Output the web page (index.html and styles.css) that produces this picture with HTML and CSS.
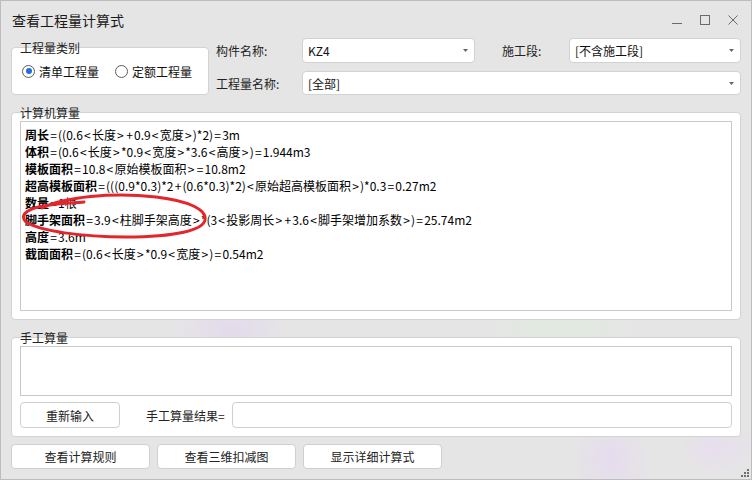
FILE: index.html
```html
<!DOCTYPE html>
<html lang="zh-CN">
<head>
<meta charset="utf-8">
<title>查看工程量计算式</title>
<link rel="stylesheet" href="styles.css">
</head>
<body>
<div class="window">
  <div class="titlebar">
    <div class="title">查看工程量计算式</div>
    <div class="controls">
      <svg width="10" height="10" viewBox="0 0 10 10"><line x1="0" y1="8.5" x2="10" y2="8.5" stroke="#6a6a6a" stroke-width="1"/></svg>
      <svg width="10" height="10" viewBox="0 0 10 10"><rect x="0.5" y="0.5" width="9" height="9" fill="none" stroke="#6a6a6a" stroke-width="1"/></svg>
      <svg width="10" height="10" viewBox="0 0 10 10"><path d="M0.5 0.5 L9.5 9.5 M9.5 0.5 L0.5 9.5" stroke="#6a6a6a" stroke-width="1" fill="none"/></svg>
    </div>
  </div>

  <div class="toprow">
    <div class="group group-type">
      <div class="group-title">工程量类别</div>
      <div class="group-box radios">
        <label class="radio"><span class="dot checked"></span>清单工程量</label>
        <label class="radio second"><span class="dot"></span>定额工程量</label>
      </div>
    </div>
    <div class="fields">
      <div class="flabel">构件名称:</div>
      <div class="combo"><span>KZ4</span><svg class="arrow" width="5" height="3" viewBox="0 0 5 3"><path d="M0 0 L5 0 L2.5 3 Z" fill="#666"/></svg></div>
      <div class="flabel pad">施工段:</div>
      <div class="combo"><span>[不含施工段]</span><svg class="arrow" width="5" height="3" viewBox="0 0 5 3"><path d="M0 0 L5 0 L2.5 3 Z" fill="#666"/></svg></div>
      <div class="flabel">工程量名称:</div>
      <div class="combo wide"><span>[全部]</span><svg class="arrow" width="5" height="3" viewBox="0 0 5 3"><path d="M0 0 L5 0 L2.5 3 Z" fill="#666"/></svg></div>
    </div>
  </div>

  <div class="group group-calc">
    <div class="group-title">计算机算量</div>
    <div class="group-box calc-box">
      <div class="textarea formulas">
        <div><b>周长</b><span class="o">=</span>((0.6<span class="o">&lt;</span>长度<span class="o">&gt;</span><span class="o">+</span>0.9<span class="o">&lt;</span>宽度<span class="o">&gt;</span>)*2)<span class="o">=</span>3m</div>
        <div><b>体积</b><span class="o">=</span>(0.6<span class="o">&lt;</span>长度<span class="o">&gt;</span>*0.9<span class="o">&lt;</span>宽度<span class="o">&gt;</span>*3.6<span class="o">&lt;</span>高度<span class="o">&gt;</span>)<span class="o">=</span>1.944m3</div>
        <div><b>模板面积</b><span class="o">=</span>10.8<span class="o">&lt;</span>原始模板面积<span class="o">&gt;</span><span class="o">=</span>10.8m2</div>
        <div><b>超高模板面积</b><span class="o">=</span>(((0.9*0.3)*2<span class="o">+</span>(0.6*0.3)*2)<span class="o">&lt;</span>原始超高模板面积<span class="o">&gt;</span>)*0.3<span class="o">=</span>0.27m2</div>
        <div><b>数量</b><span class="o">=</span>1根</div>
        <div><b>脚手架面积</b><span class="o">=</span>3.9<span class="o">&lt;</span>柱脚手架高度<span class="o">&gt;</span>*(3<span class="o">&lt;</span>投影周长<span class="o">&gt;</span><span class="o">+</span>3.6<span class="o">&lt;</span>脚手架增加系数<span class="o">&gt;</span>)<span class="o">=</span>25.74m2</div>
        <div><b>高度</b><span class="o">=</span>3.6m</div>
        <div><b>截面面积</b><span class="o">=</span>(0.6<span class="o">&lt;</span>长度<span class="o">&gt;</span>*0.9<span class="o">&lt;</span>宽度<span class="o">&gt;</span>)<span class="o">=</span>0.54m2</div>
      </div>
    </div>
  </div>

  <div class="group group-manual">
    <div class="group-title">手工算量</div>
    <div class="group-box manual-box">
      <div class="textarea manual-input"></div>
      <div class="manual-row">
        <div class="btn reinput">重新输入</div>
        <div class="result-label">手工算量结果=</div>
        <div class="result-input"></div>
      </div>
    </div>
  </div>

  <div class="bottom-buttons">
    <div class="btn wide-btn">查看计算规则</div>
    <div class="btn wide-btn">查看三维扣减图</div>
    <div class="btn wide-btn">显示详细计算式</div>
  </div>

  <svg class="grip" width="9" height="9" viewBox="0 0 9 9">
    <rect x="6" y="0" width="2" height="2" fill="#6e6e6e"/>
    <rect x="3" y="3" width="2" height="2" fill="#6e6e6e"/>
    <rect x="6" y="3" width="2" height="2" fill="#6e6e6e"/>
    <rect x="0" y="6" width="2" height="2" fill="#6e6e6e"/>
    <rect x="3" y="6" width="2" height="2" fill="#6e6e6e"/>
    <rect x="6" y="6" width="2" height="2" fill="#6e6e6e"/>
  </svg>

  <svg class="annotation" width="752" height="480" viewBox="0 0 752 480">
    <path d="M42 208 C 64 197, 112 192, 156 197 C 190 201, 207 210, 205 220 C 203 230, 176 237, 126 237 C 82 237, 40 231, 26 222 C 18 214, 30 207, 50 205 C 62 203, 74 203, 84 202" fill="none" stroke="#e3262b" stroke-width="3" stroke-linecap="round" stroke-linejoin="round"/>
  </svg>
</div>
</body>
</html>
```
FILE: styles.css
```css
* { box-sizing: border-box; }

html, body {
  margin: 0;
  padding: 0;
  background: #e6e6e6;
}

body {
  font-family: "Noto Sans CJK SC", "Noto Sans", sans-serif;
  font-size: 12px;
  color: #1a1a1a;
}

.window {
  position: relative;
  width: 752px;
  height: 480px;
  border: 1px solid #bdbdbd;
  background:
    radial-gradient(ellipse 60px 40px at 230px 330px, rgba(225, 205, 245, 0.45), transparent),
    radial-gradient(ellipse 70px 30px at 560px 325px, rgba(215, 240, 215, 0.45), transparent),
    radial-gradient(ellipse 40px 50px at 610px 460px, rgba(230, 210, 248, 0.5), transparent),
    radial-gradient(ellipse 40px 30px at 715px 445px, rgba(235, 215, 248, 0.5), transparent),
    #e5e5e5;
  padding: 0 10px;
  display: flex;
  flex-direction: column;
  overflow: hidden;
}

.titlebar {
  height: 37px;
  display: flex;
  align-items: center;
  justify-content: space-between;
}

.title {
  margin-left: 1px;
  font-size: 14px;
  color: #1a1a1a;
}

.controls {
  display: flex;
  gap: 18px;
  margin-right: 3px;
}

.controls svg { display: block; }

.toprow {
  display: flex;
  align-items: flex-start;
}

.group-title {
  position: relative;
  z-index: 1;
  height: 14px;
  line-height: 14px;
  padding-left: 9px;
  font-size: 12px;
  color: #222;
}

.group-box {
  margin-top: -8px;
  background: #ffffff;
  border: 1px solid #d3d3d3;
  border-radius: 4px;
}

.group-type {
  width: 198px;
  margin-top: 3px;
}

.radios {
  height: 48px;
  display: flex;
  align-items: center;
  padding-left: 10px;
}

.radio {
  display: flex;
  align-items: center;
  font-size: 12px;
  color: #111;
}

.radio.second { margin-left: 16px; }

.dot {
  width: 13px;
  height: 13px;
  border: 1px solid #5c5c5c;
  border-radius: 50%;
  margin-right: 4px;
  display: flex;
  align-items: center;
  justify-content: center;
  background: #fff;
}

.dot.checked::after {
  content: "";
  width: 6px;
  height: 6px;
  border-radius: 50%;
  background: #1f70dc;
}

.fields {
  margin-left: 7px;
  display: grid;
  grid-template-columns: 86px 173px 94px 172px;
  grid-template-rows: 25px 24px;
  row-gap: 8px;
}

.flabel {
  display: flex;
  align-items: center;
  font-size: 12px;
  color: #222;
}

.flabel.pad { padding-left: 27px; }

.combo {
  background: #fff;
  border: 1px solid #d2d2d2;
  border-radius: 4px;
  display: flex;
  align-items: center;
  justify-content: space-between;
  padding: 0 6px 0 5px;
  font-size: 12px;
  color: #111;
}

.combo.wide { grid-column: 2 / 5; }

.arrow { display: block; }

.group-calc { margin-top: 11px; }

.calc-box {
  height: 208px;
  padding: 8px;
  display: flex;
}

.textarea {
  background: #fff;
  border: 1px solid #c9c9c9;
}

.formulas {
  flex: 1;
  padding: 4px 4px;
  font-size: 12px;
  line-height: 17px;
  color: #000;
  white-space: nowrap;
}

.formulas b { font-weight: bold; }

.formulas .o { padding: 0 1.2px; }

.group-manual { margin-top: 11px; }

.manual-box {
  height: 100px;
  padding: 8px;
}

.manual-input { height: 50px; }

.manual-row {
  margin-top: 6px;
  height: 26px;
  display: flex;
  align-items: stretch;
}

.btn {
  background: #fff;
  border: 1px solid #cfcfcf;
  border-radius: 4px;
  display: flex;
  align-items: center;
  justify-content: center;
  font-size: 12px;
  color: #222;
}

.reinput { width: 100px; }

.result-label {
  margin-left: 26px;
  width: 86px;
  display: flex;
  align-items: center;
  color: #222;
}

.result-input {
  flex: 1;
  background: #fff;
  border: 1px solid #cfcfcf;
  border-radius: 4px;
}

.bottom-buttons {
  margin-top: 7px;
  height: 25px;
  display: flex;
  gap: 7px;
}

.wide-btn { width: 139px; }

.grip {
  position: absolute;
  right: 1px;
  bottom: 1px;
}

.annotation {
  position: absolute;
  left: -1px;
  top: -1px;
  pointer-events: none;
}
```
